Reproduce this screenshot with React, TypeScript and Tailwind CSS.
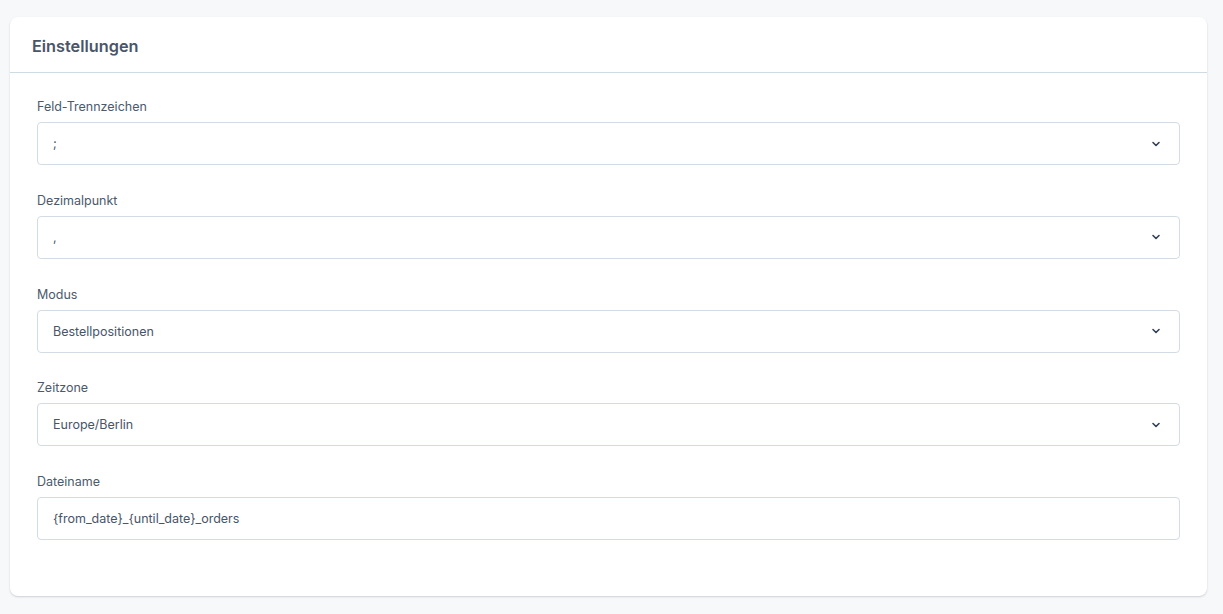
import React from 'react';

const fields = [
  { label: 'Feld-Trennzeichen', value: ';', select: true },
  { label: 'Dezimalpunkt', value: ',', select: true },
  { label: 'Modus', value: 'Bestellpositionen', select: true },
  { label: 'Zeitzone', value: 'Europe/Berlin', select: true },
  { label: 'Dateiname', value: '{from_date}_{until_date}_orders', select: false },
];

function Chevron() {
  return (
    <svg width="10" height="10" viewBox="0 0 10 10" fill="none" className="shrink-0">
      <path d="M2 3.5 L5 6.5 L8 3.5" stroke="#334155" strokeWidth="1.6" strokeLinecap="round" strokeLinejoin="round" />
    </svg>
  );
}

export default function App() {
  return (
    <div className="min-h-[614px] bg-[#f7f8fa] pt-[17px] pl-[10px] pr-[16px] font-['Inter','Liberation_Sans',sans-serif]">
      <div className="rounded-lg bg-white shadow-[0_1px_2px_rgba(15,23,42,0.18)]">
        {/* header */}
        <div className="flex h-[56px] items-center border-b border-[#cfdbe3] px-[22px] pt-[4px]">
          <h2 className="text-[16.3px] font-semibold text-[#4a5568]">Einstellungen</h2>
        </div>

        {/* form */}
        <div className="flex flex-col gap-[24.75px] px-[27px] pt-[23px] pb-[56px]">
          {fields.map((f) => (
            <div key={f.label} className="flex flex-col gap-[5px]">
              <label className="pt-[1px] text-[12.5px] leading-[20px] text-[#4b5a6d]">{f.label}</label>
              <div className="flex h-[43px] items-center justify-between rounded border border-[#d3dce4] pl-[15px] pr-[18px]">
                <span className="pt-[2px] text-[12.5px] text-[#475569]">{f.value}</span>
                {f.select && <Chevron />}
              </div>
            </div>
          ))}
        </div>
      </div>
    </div>
  );
}
